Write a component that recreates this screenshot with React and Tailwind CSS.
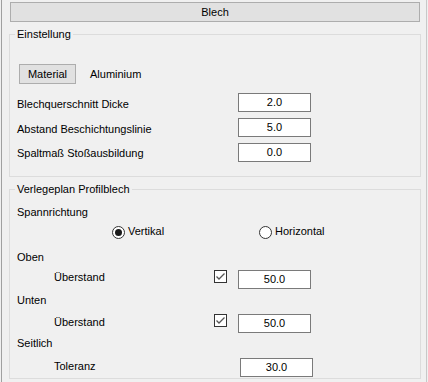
import React, { useState } from "react";

const Field = ({ value, className = "" }) => (
    <div
        className={`h-[19px] w-[73px] border border-[#7a7a7a] bg-white text-center leading-[17px] text-black ${className}`}
    >
        {value}
    </div>
);

const Check = ({ checked }) => (
    <div className="flex h-[13px] w-[13px] items-center justify-center border border-[#333333] bg-white">
        {checked && (
            <svg width="11" height="11" viewBox="0 0 11 11">
                <path d="M1.5 5.5 L4 8 L9.5 2.5" fill="none" stroke="#555555" strokeWidth="1.3" />
            </svg>
        )}
    </div>
);

const Radio = ({ checked, label, onClick, className = "" }) => (
    <div className={`flex items-start cursor-default ${className}`} onClick={onClick}>
        <div className="mt-[2px] flex h-[13px] w-[13px] items-center justify-center rounded-full border border-[#333333] bg-white">
            {checked && <div className="h-[7px] w-[7px] rounded-full bg-[#1a1a1a]"></div>}
        </div>
        <span className="ml-[3px] leading-[15px]">{label}</span>
    </div>
);

const App = () => {
    const [richtung, setRichtung] = useState("vertikal");

    return (
        <div className="h-[382px] w-[428px] overflow-hidden bg-[#f0f0f0] font-['Liberation_Sans',Arial,sans-serif] text-[11px] text-black">
            <div className="ml-px flex h-full w-[426px] flex-col border-x border-l-[#a0a0a0] border-r-[#c8c8c8]">
                {/* Kopfzeile */}
                <button className="ml-[8px] mt-[2px] h-[20px] w-[410px] border border-[#adadad] bg-[#e1e1e1] text-center leading-[18px]">
                    Blech
                </button>

                {/* Einstellung */}
                <fieldset className="ml-[7px] mt-[5px] w-[412px] border border-[#dcdcdc] pb-[14px]">
                    <legend className="ml-[5px] px-[2px] leading-[14px]">Einstellung</legend>
                    <div className="ml-[9px] mt-[23px] flex items-center">
                        <div className="h-[20px] w-[57px] border border-[#adadad] bg-[#e1e1e1] text-center leading-[18px]">
                            Material
                        </div>
                        <span className="ml-[14px]">Aluminium</span>
                    </div>
                    <div className="mt-[9px] flex items-start pl-[7px]">
                        <span className="mt-[4px] w-[221px] leading-[15px]">Blechquerschnitt Dicke</span>
                        <Field value="2.0" />
                    </div>
                    <div className="mt-[6px] flex items-start pl-[7px]">
                        <span className="mt-[4px] w-[221px] leading-[15px]">Abstand Beschichtungslinie</span>
                        <Field value="5.0" />
                    </div>
                    <div className="mt-[6px] flex items-start pl-[7px]">
                        <span className="mt-[3px] w-[221px] leading-[15px]">Spaltmaß Stoßausbildung</span>
                        <Field value="0.0" />
                    </div>
                </fieldset>

                {/* Verlegeplan */}
                <fieldset className="ml-[7px] mt-[5px] w-[412px] border border-[#dcdcdc] pb-[1px]">
                    <legend className="ml-[5px] px-[2px] leading-[14px]">Verlegeplan Profilblech</legend>
                    <div className="mt-[9px] pl-[7px] leading-[15px]">Spannrichtung</div>
                    <div className="mt-[4px] flex">
                        <Radio
                            className="ml-[102px] w-[147px]"
                            label="Vertikal"
                            checked={richtung === "vertikal"}
                            onClick={() => setRichtung("vertikal")}
                        />
                        <Radio
                            label="Horizontal"
                            checked={richtung === "horizontal"}
                            onClick={() => setRichtung("horizontal")}
                        />
                    </div>
                    <div className="mt-[11px] pl-[7px] leading-[15px]">Oben</div>
                    <div className="mt-[5px] flex items-start pl-[44px]">
                        <span className="w-[160px] leading-[15px]">Überstand</span>
                        <Check checked />
                        <Field value="50.0" className="ml-[11px]" />
                    </div>
                    <div className="mt-[4px] pl-[7px] leading-[15px]">Unten</div>
                    <div className="mt-[6px] flex items-start pl-[44px]">
                        <span className="mt-[1px] w-[160px] leading-[15px]">Überstand</span>
                        <Check checked />
                        <Field value="50.0" className="ml-[11px]" />
                    </div>
                    <div className="mt-[3px] pl-[7px] leading-[15px]">Seitlich</div>
                    <div className="mt-[7px] flex items-start pl-[44px]">
                        <span className="mt-[1px] w-[186px] leading-[15px]">Toleranz</span>
                        <Field value="30.0" />
                    </div>
                </fieldset>
            </div>
        </div>
    );
};

export default App;
